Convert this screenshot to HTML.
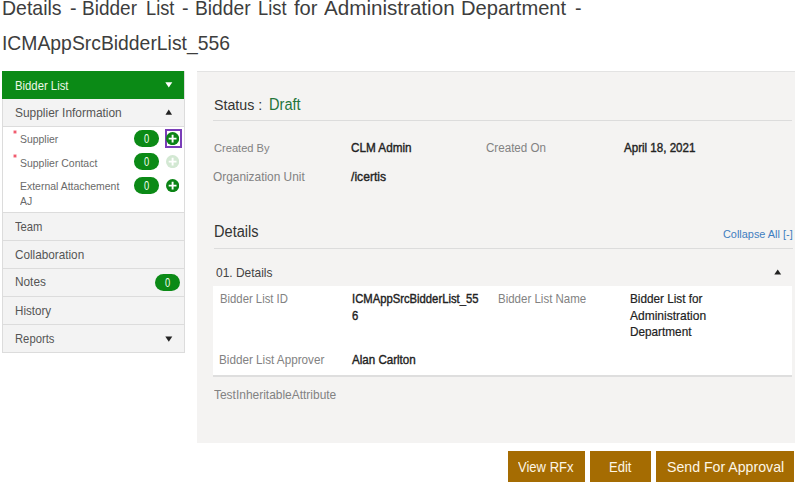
<!DOCTYPE html>
<html><head><meta charset="utf-8"><style>
html,body{margin:0;padding:0;background:#fff;width:800px;height:483px;overflow:hidden;position:relative;font-family:"Liberation Sans",sans-serif;}
.t{position:absolute;white-space:nowrap;line-height:1;transform-origin:0 0;}
.r{position:absolute;}
.pill{position:absolute;width:25px;height:16.5px;border-radius:8.25px;background:#0b8a16;color:#f4fff0;font-size:12px;text-align:center;}
.pill span{display:block;line-height:19px;transform:scaleX(0.78);}
</style></head><body>
<div class="t" style="left:2.42px;top:-1px;font-size:19.8px;color:#3d3d3d;transform:scaleX(0.9847);">Details</div>
<div class="t" style="left:69.50px;top:-1px;font-size:19.8px;color:#3d3d3d;transform:scaleX(0.9963);">-</div>
<div class="t" style="left:82.24px;top:-1px;font-size:19.8px;color:#3d3d3d;transform:scaleX(0.9614);">Bidder</div>
<div class="t" style="left:145.73px;top:-1px;font-size:19.8px;color:#3d3d3d;transform:scaleX(0.9217);">List</div>
<div class="t" style="left:181.80px;top:-1px;font-size:19.8px;color:#3d3d3d;transform:scaleX(0.9963);">-</div>
<div class="t" style="left:194.83px;top:-1px;font-size:19.8px;color:#3d3d3d;transform:scaleX(0.9719);">Bidder</div>
<div class="t" style="left:258.17px;top:-1px;font-size:19.8px;color:#3d3d3d;transform:scaleX(0.9267);">List</div>
<div class="t" style="left:293.60px;top:-1px;font-size:19.8px;color:#3d3d3d;transform:scaleX(1.0167);">for</div>
<div class="t" style="left:324.00px;top:-1px;font-size:19.8px;color:#3d3d3d;transform:scaleX(1.042);">Administration</div>
<div class="t" style="left:461.48px;top:-1px;font-size:19.8px;color:#3d3d3d;transform:scaleX(1.0175);">Department</div>
<div class="t" style="left:575.00px;top:-1px;font-size:19.8px;color:#3d3d3d;transform:scaleX(0.9963);">-</div>
<div class="t" style="left:2.12px;top:34px;font-size:19.8px;color:#3d3d3d;transform:scaleX(0.978);">ICMAppSrcBidderList_556</div>
<div class="r" style="left:2.00px;top:71.00px;width:183.00px;height:282.00px;background:#dcdcdc;"></div>
<div class="r" style="left:2.00px;top:71.00px;width:182.00px;height:27.50px;background:#0b8a16;"></div>
<div class="t" style="left:15.00px;top:80.00px;font-size:12.16px;color:#eef7e8;font-weight:normal; transform:scaleX(0.9310);">Bidder List</div>
<svg class="r" style="left:165px;top:82px" width="8" height="6"><path d="M0.3 0.2 L7.3 0.2 L3.8 5.6 Z" fill="#fff"/></svg>
<div class="r" style="left:3.00px;top:98.50px;width:181.00px;height:27.50px;background:#f3f3f3;"></div>
<div class="t" style="left:15.00px;top:107.00px;font-size:12.66px;color:#555;font-weight:normal; transform:scaleX(0.9425);">Supplier Information</div>
<svg class="r" style="left:165px;top:108.8px" width="8" height="6"><path d="M0.5 5.8 L7 5.8 L3.75 0.5 Z" fill="#222"/></svg>
<div class="r" style="left:3.00px;top:127.00px;width:181.00px;height:85.00px;background:#fff;"></div>
<svg class="r" style="left:13px;top:130.40px" width="4" height="4"><path d="M2 0.2 V3.8 M0.4 1.1 L3.6 2.9 M0.4 2.9 L3.6 1.1" stroke="#f04e62" stroke-width="1"/></svg>
<div class="t" style="left:20.30px;top:134.00px;font-size:11.17px;color:#6a6a6a;font-weight:normal; transform:scaleX(0.9341);">Supplier</div>
<div class="pill" style="left:134.2px;top:130.10px;"><span>0</span></div>
<div class="r" style="left:164.70px;top:129.20px;width:17.00px;height:18.90px;background:transparent;border:2px solid #7a3db8;box-sizing:border-box;"></div>
<svg class="r" style="left:165.9px;top:131.80px" width="13.2" height="13.2"><circle cx="6.6" cy="6.6" r="6.6" fill="#0b8415"/><path d="M6.6 2.7 V10.5 M2.7 6.6 H10.5" stroke="#fff" stroke-width="1.9"/></svg>
<svg class="r" style="left:13px;top:153.70px" width="4" height="4"><path d="M2 0.2 V3.8 M0.4 1.1 L3.6 2.9 M0.4 2.9 L3.6 1.1" stroke="#f04e62" stroke-width="1"/></svg>
<div class="t" style="left:20.30px;top:158.00px;font-size:11.08px;color:#6a6a6a;font-weight:normal; transform:scaleX(0.9439);">Supplier Contact</div>
<div class="pill" style="left:134.2px;top:153.40px;"><span>0</span></div>
<svg class="r" style="left:165.9px;top:155.10px" width="13.2" height="13.2"><circle cx="6.6" cy="6.6" r="6.6" fill="#d3e8d3"/><path d="M6.6 2.7 V10.5 M2.7 6.6 H10.5" stroke="#fff" stroke-width="1.9"/></svg>
<div class="t" style="left:20.30px;top:181.00px;font-size:11.11px;color:#6a6a6a;font-weight:normal; transform:scaleX(0.9406);">External Attachement</div>
<div class="pill" style="left:134.2px;top:177.20px;"><span>0</span></div>
<svg class="r" style="left:165.9px;top:178.90px" width="13.2" height="13.2"><circle cx="6.6" cy="6.6" r="6.6" fill="#0b8415"/><path d="M6.6 2.7 V10.5 M2.7 6.6 H10.5" stroke="#fff" stroke-width="1.9"/></svg>
<div class="t" style="left:20.30px;top:195.80px;font-size:11.11px;color:#6a6a6a;font-weight:normal; transform:scaleX(0.9406);">AJ</div>
<div class="r" style="left:3.00px;top:213.00px;width:181.00px;height:27.00px;background:#f3f3f3;"></div>
<div class="t" style="left:15.20px;top:221.00px;font-size:12.13px;color:#555;font-weight:normal; transform:scaleX(0.9267);">Team</div>
<div class="r" style="left:3.00px;top:241.00px;width:181.00px;height:27.00px;background:#f3f3f3;"></div>
<div class="t" style="left:15.00px;top:249.00px;font-size:12.52px;color:#555;font-weight:normal; transform:scaleX(0.9378);">Collaboration</div>
<div class="r" style="left:3.00px;top:269.00px;width:181.00px;height:27.00px;background:#f3f3f3;"></div>
<div class="t" style="left:14.90px;top:276.00px;font-size:12.36px;color:#555;font-weight:normal; transform:scaleX(0.9562);">Notes</div>
<div class="r" style="left:3.00px;top:297.00px;width:181.00px;height:27.00px;background:#f3f3f3;"></div>
<div class="t" style="left:15.00px;top:305.00px;font-size:12.30px;color:#555;font-weight:normal; transform:scaleX(0.9436);">History</div>
<div class="r" style="left:3.00px;top:325.00px;width:181.00px;height:27.00px;background:#f3f3f3;"></div>
<div class="t" style="left:15.00px;top:333.00px;font-size:12.14px;color:#555;font-weight:normal; transform:scaleX(0.9279);">Reports</div>
<div class="pill" style="left:154.5px;top:274px;width:25.2px;height:17px;border-radius:8.5px"><span>0</span></div>
<svg class="r" style="left:165px;top:335.6px" width="8" height="6"><path d="M0.3 0.5 L7.3 0.5 L3.8 5.8 Z" fill="#222"/></svg>
<div class="r" style="left:196.90px;top:70.80px;width:597.70px;height:372.20px;background:#f4f3f2;border-top:1px solid #e3e3e3;box-sizing:border-box;"></div>
<div class="t" style="left:213.80px;top:97.00px;font-size:15.24px;color:#333;font-weight:normal; transform:scaleX(0.9333);">Status :</div>
<div class="t" style="left:269.30px;top:97.00px;font-size:15.71px;color:#23753a;font-weight:normal; transform:scaleX(0.9286);">Draft</div>
<div class="r" style="left:213.30px;top:120.00px;width:579.20px;height:1.30px;background:#dcdcdc;"></div>
<div class="t" style="left:213.80px;top:142.00px;font-size:11.72px;color:#828282;font-weight:normal; transform:scaleX(0.9475);">Created By</div>
<div class="t" style="left:351.00px;top:142.00px;font-size:12.53px;color:#222;font-weight:normal; transform:scaleX(0.9369);-webkit-text-stroke:0.38px #222;">CLM Admin</div>
<div class="t" style="left:485.50px;top:142.00px;font-size:12.24px;color:#828282;font-weight:normal; transform:scaleX(0.9476);">Created On</div>
<div class="t" style="left:623.60px;top:142.00px;font-size:12.24px;color:#222;font-weight:normal; transform:scaleX(0.9453);-webkit-text-stroke:0.38px #222;">April 18, 2021</div>
<div class="t" style="left:213.40px;top:171.00px;font-size:12.66px;color:#828282;font-weight:normal; transform:scaleX(0.9378);">Organization Unit</div>
<div class="t" style="left:351.00px;top:171.00px;font-size:12.87px;color:#222;font-weight:normal; transform:scaleX(0.9459);-webkit-text-stroke:0.38px #222;">/icertis</div>
<div class="t" style="left:213.80px;top:224.00px;font-size:15.60px;color:#333;font-weight:normal; transform:scaleX(0.9354);">Details</div>
<div class="t" style="left:722.50px;top:228.00px;font-size:11.64px;color:#3f7ec0;font-weight:normal; transform:scaleX(0.9378);">Collapse All [-]</div>
<div class="r" style="left:213.50px;top:247.60px;width:579.40px;height:1.20px;background:#dcdcdc;"></div>
<div class="t" style="left:216.30px;top:267.00px;font-size:12.86px;color:#444;font-weight:normal; transform:scaleX(0.9295);">01. Details</div>
<svg class="r" style="left:773.5px;top:269px" width="8" height="6"><path d="M0.3 5.5 L7.2 5.5 L3.75 0.5 Z" fill="#222"/></svg>
<div class="r" style="left:213.20px;top:375.00px;width:579.30px;height:1.80px;background:#dedede;"></div>
<div class="r" style="left:213.20px;top:285.70px;width:579.30px;height:89.30px;background:#fff;"></div>
<div class="t" style="left:219.90px;top:293.00px;font-size:12.02px;color:#828282;font-weight:normal; transform:scaleX(0.9417);">Bidder List ID</div>
<div class="t" style="left:351.60px;top:293.00px;font-size:12.09px;color:#222;font-weight:normal; transform:scaleX(0.9324);-webkit-text-stroke:0.38px #222;">ICMAppSrcBidderList_55</div>
<div class="t" style="left:351.60px;top:309.80px;font-size:12.09px;color:#222;font-weight:normal; transform:scaleX(0.9324);-webkit-text-stroke:0.38px #222;">6</div>
<div class="t" style="left:497.50px;top:293.00px;font-size:12.35px;color:#828282;font-weight:normal; transform:scaleX(0.9316);">Bidder List Name</div>
<div class="t" style="left:630.40px;top:293.00px;font-size:12.46px;color:#222;font-weight:normal; transform:scaleX(0.9429);-webkit-text-stroke:0.2px #222;">Bidder List for</div>
<div class="t" style="left:630.40px;top:310.00px;font-size:12.77px;color:#222;font-weight:normal; transform:scaleX(0.9407);-webkit-text-stroke:0.2px #222;">Administration</div>
<div class="t" style="left:630.40px;top:326.00px;font-size:12.70px;color:#222;font-weight:normal; transform:scaleX(0.9269);-webkit-text-stroke:0.2px #222;">Department</div>
<div class="t" style="left:219.30px;top:354.00px;font-size:12.50px;color:#828282;font-weight:normal; transform:scaleX(0.9354);">Bidder List Approver</div>
<div class="t" style="left:352.30px;top:354.00px;font-size:12.37px;color:#222;font-weight:normal; transform:scaleX(0.9368);-webkit-text-stroke:0.38px #222;">Alan Carlton</div>
<div class="t" style="left:214.00px;top:389.00px;font-size:12.79px;color:#828282;font-weight:normal; transform:scaleX(0.9351);">TestInheritableAttribute</div>
<div class="r" style="left:508.00px;top:451.00px;width:76.60px;height:30.60px;background:#a56c02;"></div>
<div class="t" style="left:518.40px;top:460.00px;font-size:13.98px;color:#fdf6e6;font-weight:normal; transform:scaleX(0.9333);">View RFx</div>
<div class="r" style="left:590.00px;top:451.00px;width:61.00px;height:30.60px;background:#a56c02;"></div>
<div class="t" style="left:609.00px;top:461.00px;font-size:13.91px;color:#fdf6e6;font-weight:normal; transform:scaleX(0.9360);">Edit</div>
<div class="r" style="left:656.40px;top:451.00px;width:137.60px;height:30.60px;background:#a56c02;"></div>
<div class="t" style="left:667.00px;top:459.00px;font-size:15.11px;color:#fdf6e6;font-weight:normal; transform:scaleX(0.9360);">Send For Approval</div>
</body></html>
